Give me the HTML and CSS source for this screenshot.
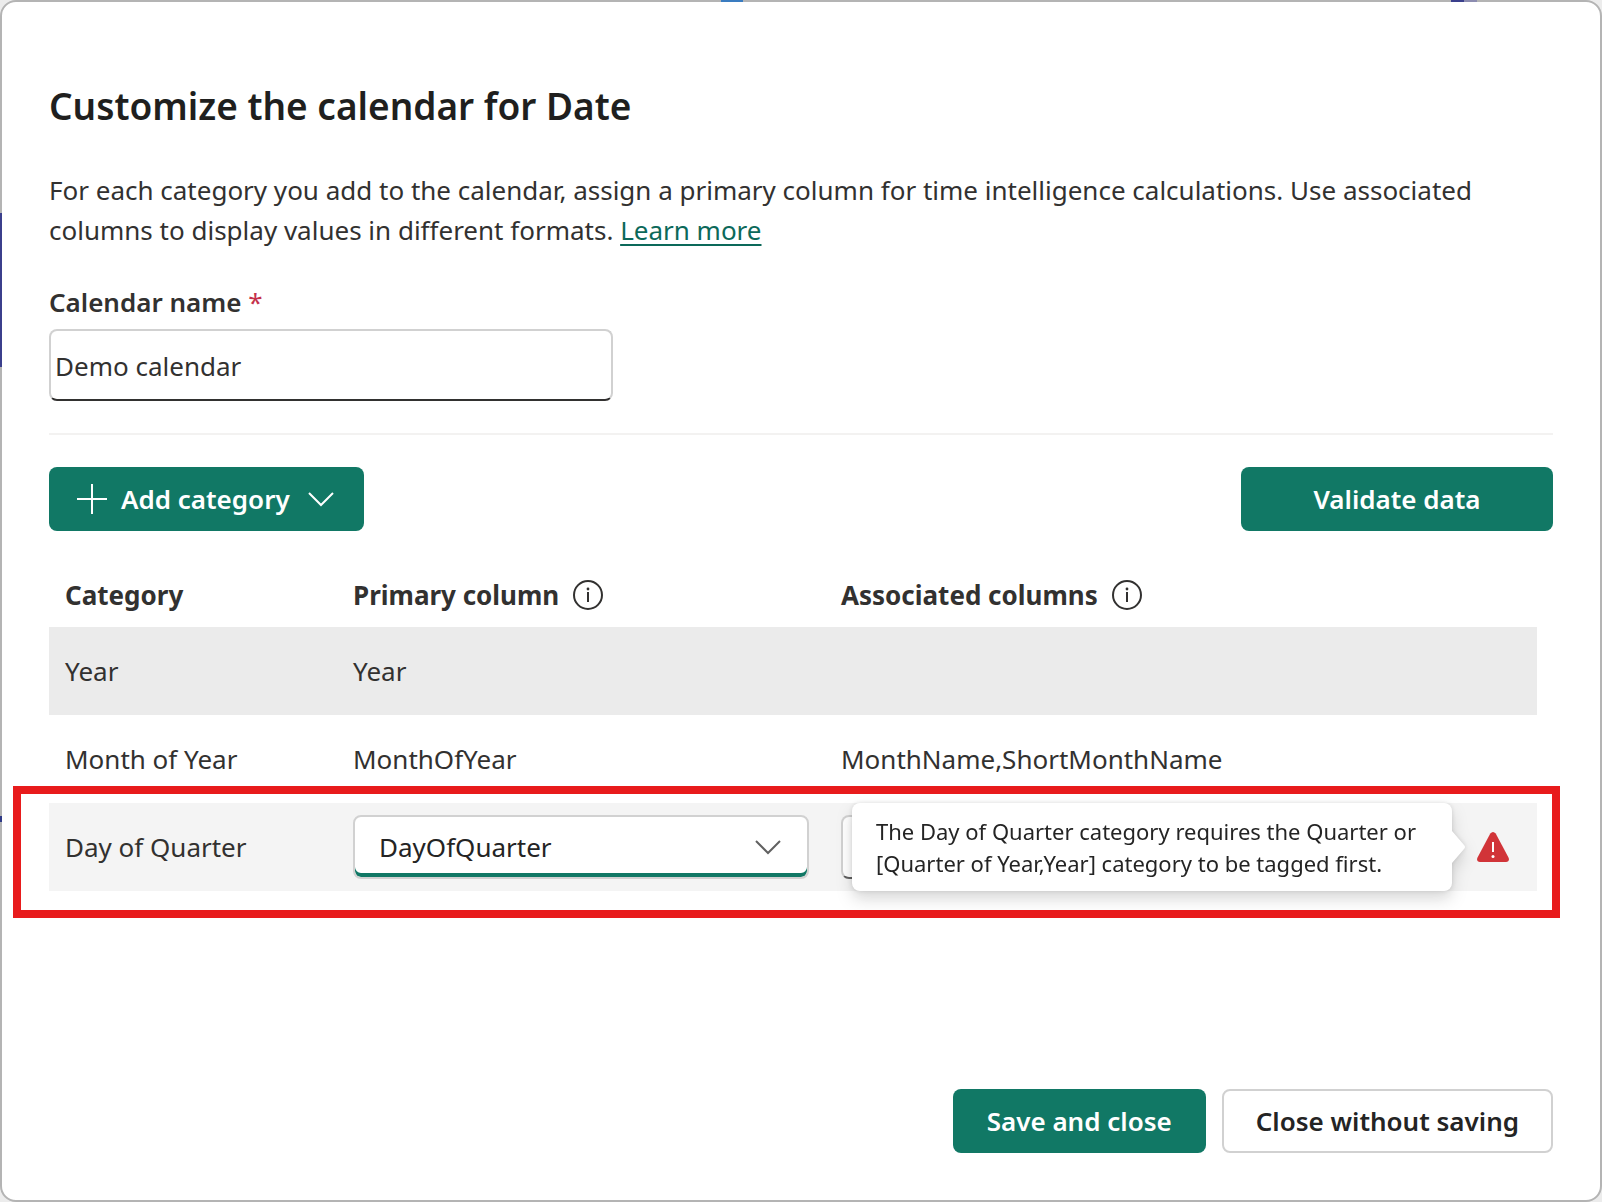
FILE: index.html
```html
<!DOCTYPE html>
<html lang="en">
<head>
<meta charset="utf-8">
<title>Customize the calendar for Date</title>
<link rel="stylesheet" href="styles.css">
</head>
<body>
<main class="dialog" role="dialog" aria-labelledby="dialog-title">
  <h1 class="title" id="dialog-title">Customize the calendar for Date</h1>
  <p class="intro">For each category you add to the calendar, assign a primary column for time intelligence calculations. Use associated columns to display values in different formats. <a class="link" href="#">Learn more</a></p>

  <div class="field">
    <label class="label" for="calendar-name">Calendar name <span class="required">*</span></label>
    <input class="text-input" id="calendar-name" type="text" value="Demo calendar" required>
  </div>

  <div class="toolbar">
    <button class="button button-primary button-menu" type="button">
      <svg class="icon-plus" viewBox="0 0 30 30" aria-hidden="true"><path d="M15 0v30M0 15h30"/></svg>
      Add category
      <svg class="icon-chevron" viewBox="0 0 26 16" aria-hidden="true"><path d="M1 2l12 12L25 2"/></svg>
    </button>
    <button class="button button-primary button-validate" type="button">Validate data</button>
  </div>

  <div class="table-wrap">
    <table class="categories">
      <colgroup><col class="col-category"><col class="col-primary"><col><col class="col-status"></colgroup>
      <thead>
        <tr>
          <th scope="col">Category</th>
          <th scope="col"><span class="heading">Primary column
            <svg class="icon-info" viewBox="0 0 32 32" aria-hidden="true"><circle cx="16" cy="16" r="14"/><path d="M16 13v10"/><circle class="dot" cx="16" cy="10" r="1.4"/></svg></span></th>
          <th scope="col" colspan="2"><span class="heading">Associated columns
            <svg class="icon-info" viewBox="0 0 32 32" aria-hidden="true"><circle cx="16" cy="16" r="14"/><path d="M16 13v10"/><circle class="dot" cx="16" cy="10" r="1.4"/></svg></span></th>
        </tr>
      </thead>
      <tbody>
        <tr class="row-selected"><td>Year</td><td>Year</td><td></td><td></td></tr>
        <tr><td>Month of Year</td><td>MonthOfYear</td><td>MonthName,ShortMonthName</td><td></td></tr>
        <tr class="row-active">
          <td>Day of Quarter</td>
          <td>
            <div class="picker picker-focused">
              <select class="select" aria-label="Primary column"><option>DayOfQuarter</option></select>
              <svg class="icon-chevron" viewBox="0 0 26 16" aria-hidden="true"><path d="M1 2l12 12L25 2"/></svg>
            </div>
          </td>
          <td>
            <div class="picker">
              <select class="select" aria-label="Associated columns"><option></option></select>
            </div>
          </td>
          <td>
            <div class="status">
              <svg class="icon-error" viewBox="0 0 32 30" role="img" aria-label="Error"><path class="shape" d="M13.300 1.600Q16-1.600 18.700 1.600L31.600 25.800Q32.800 29.500 29 30H3Q-.8 29.500 .4 25.800z"/><path class="mark" d="M16 10v10"/><circle cx="16" cy="24.500" r="1.500"/></svg>
              <div class="tooltip" role="tooltip">The Day of Quarter category requires the Quarter or [Quarter of Year,Year] category to be tagged first.
                <svg class="tooltip-arrow" viewBox="0 0 14 32" aria-hidden="true"><path d="M0 0L12 14Q14 16 12 18L0 32z"/></svg>
              </div>
            </div>
          </td>
        </tr>
      </tbody>
    </table>
    <div class="callout"></div>
  </div>

  <footer class="actions">
    <button class="button button-primary" type="button">Save and close</button>
    <button class="button button-secondary" type="button">Close without saving</button>
  </footer>
</main>
<div class="peek peek-report"></div>
<div class="peek peek-slicer"></div>
<div class="peek peek-ring"></div>
<div class="peek peek-line"></div>
</body>
</html>
```

FILE: styles.css
```css
* {
  box-sizing: border-box;
}

body {
  margin: 0;
  background: #ececec;
  color: #323130;
  font-family: "Noto Sans", "Open Sans", sans-serif;
  font-size: 26px;
  line-height: 40px;
}

.dialog {
  display: flex;
  flex-direction: column;
  min-height: 100vh;
  padding: 80px 47px 47px;
  border: 2px solid #b4b4b4;
  border-radius: 16px;
  background: #fff;
}

.title {
  margin: 0;
  color: #201f1e;
  font-size: 37px;
  font-weight: 600;
  line-height: 48px;
}

.intro {
  margin: 40px 0 0;
}

.link {
  color: #0c695a;
  text-decoration-thickness: 2px;
  text-underline-offset: 4px;
}

.field {
  display: flex;
  flex-direction: column;
  gap: 7px;
  padding: 32px 0;
  border-bottom: 2px solid #f3f2f1;
}

.label {
  font-weight: 600;
}

.required {
  color: #c4314b;
  font-weight: 400;
}

.text-input {
  width: 564px;
  height: 72px;
  padding: 6px 4px 4px;
  border: 2px solid #d1d1d1;
  border-bottom-color: #323130;
  border-radius: 8px;
  background: #fff;
  color: inherit;
  font: inherit;
}

.toolbar {
  display: flex;
  justify-content: space-between;
  padding: 32px 0;
}

.button {
  height: 64px;
  padding: 0 32px;
  border: 2px solid transparent;
  border-radius: 8px;
  font: inherit;
  font-weight: 600;
}

.button-primary {
  background: #117865;
  color: #fff;
}

.button-secondary {
  border-color: #d1d1d1;
  background: #fff;
  color: #242424;
}

.button-menu {
  display: flex;
  align-items: center;
  gap: 14px;
  padding: 0 28px 0 26px;
}

.button-menu .icon-chevron {
  margin-left: 4px;
}

.button-validate {
  width: 312px;
}

.icon-plus,
.icon-chevron,
.icon-info {
  flex: none;
  fill: none;
  stroke: currentColor;
  stroke-width: 2;
}

.icon-plus {
  width: 30px;
  height: 30px;
}

.icon-chevron {
  width: 26px;
  height: 16px;
}

.icon-info {
  width: 32px;
  height: 32px;
}

.icon-info .dot {
  fill: currentColor;
  stroke: none;
}

.table-wrap {
  position: relative;
  margin-right: 16px;
}

.categories {
  width: 100%;
  border-collapse: collapse;
  table-layout: fixed;
}

.col-category {
  width: 288px;
}

.col-primary {
  width: 488px;
}

.col-status {
  width: 92px;
}

.categories th {
  height: 64px;
  padding: 0 16px;
  font-weight: 700;
  text-align: left;
}

.heading {
  display: flex;
  align-items: center;
  gap: 13px;
}

.categories td {
  height: 88px;
  padding: 0 16px;
}

.row-selected {
  background: #ebebeb;
}

.row-active {
  background: #f4f4f4;
}

.picker {
  display: grid;
  align-items: center;
  overflow: hidden;
  height: 64px;
  border: 2px solid #d1d1d1;
  border-bottom-color: #616161;
  border-radius: 8px;
  background: #fff;
  color: #616161;
}

.picker > * {
  grid-area: 1 / 1;
}

.picker-focused {
  border-bottom-color: #d1d1d1;
  box-shadow: inset 0 -4px #117865;
}

.picker .icon-chevron {
  justify-self: end;
  margin-right: 26px;
  pointer-events: none;
}

.select {
  width: 100%;
  padding: 0 24px;
  border: 0;
  appearance: none;
  background: transparent;
  color: #242424;
  font: inherit;
}

.status {
  position: relative;
  display: flex;
  justify-content: flex-end;
  margin-right: 12px;
}

.icon-error {
  width: 32px;
  height: 30px;
  fill: #fff;
}

.icon-error .shape {
  fill: #d13438;
}

.icon-error .mark {
  stroke: #fff;
  stroke-width: 2;
}

.tooltip {
  position: absolute;
  top: 50%;
  right: 57px;
  width: 600px;
  padding: 12px 24px;
  border-radius: 8px;
  background: #fff;
  color: #242424;
  font-size: 22px;
  line-height: 32px;
  filter: drop-shadow(0 8px 8px rgb(0 0 0 / 14%)) drop-shadow(0 0 2px rgb(0 0 0 / 12%));
  transform: translateY(-50%);
}

.tooltip-arrow {
  position: absolute;
  top: 28px;
  left: 100%;
  width: 14px;
  height: 32px;
  fill: #fff;
}

/* Red frame that draws attention to the row with the error. */
.callout {
  position: absolute;
  right: -23px;
  bottom: -27px;
  left: -36px;
  height: 132px;
  border: 8px solid #e81b1c;
  pointer-events: none;
}

.actions {
  display: flex;
  justify-content: flex-end;
  gap: 16px;
  margin-top: auto;
}

/* Slivers of the report canvas that show round the dialog's edge. */
.peek {
  position: absolute;
  width: 2px;
  height: 2px;
}

.peek-report {
  top: 213px;
  left: 0;
  height: 154px;
  background: #3b3f8c;
}

.peek-slicer {
  top: 816px;
  left: 0;
  height: 6px;
  background: #2f3a86;
}

.peek-ring {
  top: 0;
  left: 45%;
  width: 22px;
  background: #3a7cc0;
}

.peek-line {
  top: 0;
  right: 125px;
  width: 26px;
  background: linear-gradient(90deg, #3a3f8c 50%, #8c8cb0 50%);
}
```
